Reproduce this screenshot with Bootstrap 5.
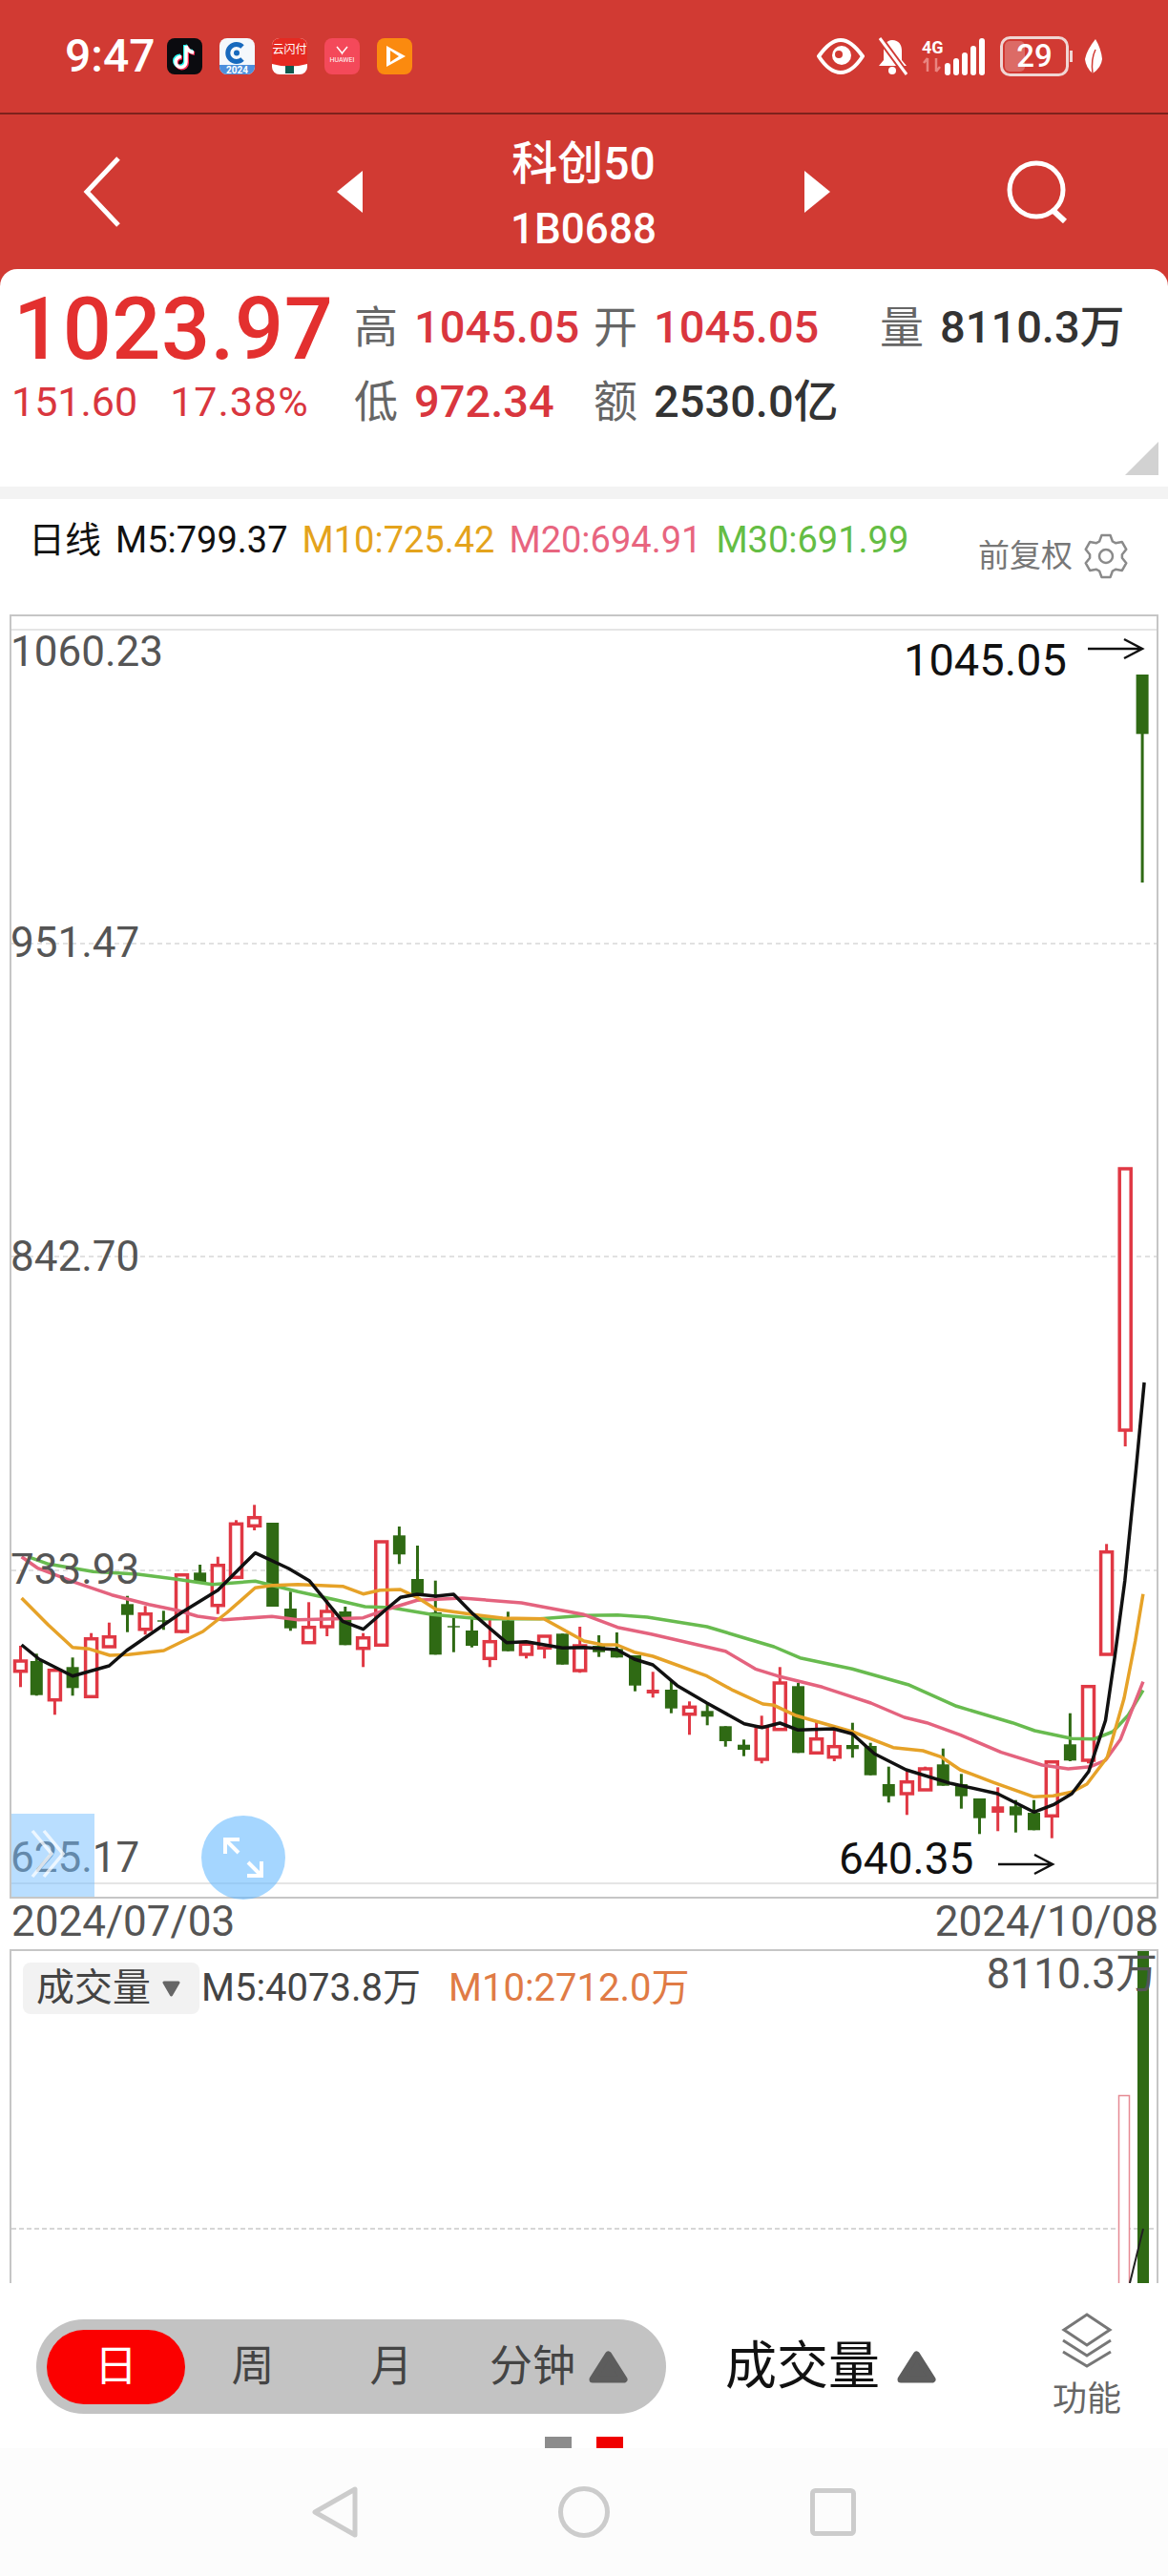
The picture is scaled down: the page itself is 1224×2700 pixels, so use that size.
<!DOCTYPE html>
<html lang="zh-CN">
<head>
  <meta charset="UTF-8" />
  <meta name="viewport" content="width=device-width, initial-scale=1.0" />
  <title>科创50</title>
  <link href="https://cdn.jsdelivr.net/npm/bootstrap@5.3.0/dist/css/bootstrap.min.css" rel="stylesheet" />
  <style>
    body { width: 1224px; height: 2700px; overflow: hidden; background: #fff; font-family: Roboto, "Noto Sans CJK SC", sans-serif; }
    svg { display: block; flex-shrink: 0; }

    .red-head { background: #d13a33; color: #fff; height: 300px; }
    .status-row { height: 120px; padding-left: 68px; padding-right: 69px; border-bottom: 2px solid #7d211c; }
    .clock { width: 107px; font-size: 48px; font-weight: 500; line-height: 1; }
    .app-icons { gap: 18px; }
    .status-icons { gap: 13px; }
    .nav-row { height: 162px; padding-left: 87px; }
    .back-cell { width: 266px; }
    .title-cell { width: 463px; padding-top: 18px; line-height: 68px; font-weight: 500; margin-bottom: 8px; }
    .title-name { font-size: 48px; }
    .title-code { font-size: 44px; }
    .next-cell { width: 212px; }

    .quote-panel { height: 228px; margin-top: -18px; background: #fff; border-radius: 18px 18px 0 0; }
    .quote-left { width: 371px; padding-top: 14px; padding-left: 14px; }
    .price-big { font-size: 90px; font-weight: 500; line-height: 100px; letter-spacing: .5px; color: #e3302f; }
    .price-sub { font-size: 43px; line-height: 50px; margin-left: -2px; color: #d9363e; white-space: nowrap; }
    .price-sub span + span { margin-left: 34px; letter-spacing: 1px; }
    .quote-right { padding-top: 31px; row-gap: 18px; }
    .q-line { height: 60px; line-height: 60px; white-space: nowrap; }
    .q-cell { font-size: 47px; font-weight: 500; }
    .q-cell.cw1 { width: 251px; }
    .q-cell.cw2 { width: 300px; }
    .q-label { display: inline-block; width: 63px; font-size: 46px; font-weight: 400; color: #666; }
    .up-num { color: #d9363e; }
    .dark-num { color: #333; }
    .corner-mark { right: 10px; bottom: 12px; width: 35px; height: 35px; background: #d2d2d2; clip-path: polygon(100% 0, 100% 100%, 0 100%); }
    .gray-strip { height: 13px; background: #f3f3f3; }

    .legend-row { height: 121px; padding: 18px 40px 0 30px; font-size: 38px; line-height: 50px; white-space: nowrap; }
    .legend-row span { margin-right: 15px; }
    .leg-m5 { color: #111; }
    .leg-m10 { color: #e4a31c; }
    .leg-m20 { color: #e8657f; }
    .leg-m30 { color: #64bd44; }
    .adj-box { gap: 10px; margin-top: 17px; font-size: 33px; color: #777; }

    .kline-box { height: 1346px; margin: 0 10px; border: 2px solid #c6c6c6; }
    .kline-box > svg, .vol-box > svg { position: absolute; left: 0; top: 0; }
    .axis-tag { position: absolute; left: -1px; font-size: 44px; line-height: 50px; color: #555; white-space: nowrap; }
    .mark-tag { position: absolute; line-height: 50px; color: #111; white-space: nowrap; }
    .mark-hi { font-size: 47px; }
    .mark-lo { font-size: 46px; }
    .hide-tab { position: absolute; left: 0; bottom: 0; width: 87px; height: 87px; background: rgba(115, 190, 255, .5); }
    .zoom-btn { position: absolute; left: 199px; top: 1257px; width: 88px; height: 88px; border-radius: 50%; background: rgba(100, 185, 255, .58); }

    .date-row { height: 53px; padding: 0 10px 0 12px; font-size: 44px; line-height: 48px; color: #555; }

    .vol-box { height: 350px; margin: 0 10px; border: 2px solid #c6c6c6; border-bottom: 0; overflow: hidden; }
    .vol-legend { padding: 12px 0 0 12px; font-size: 40px; line-height: 54px; white-space: nowrap; }
    .vol-chip { width: 185px; height: 54px; padding-left: 14px; margin-right: 2px; border-radius: 8px; background: #f2f2f2; color: #444; font-size: 40px; gap: 12px; }
    .vol-m5 { color: #444; width: 259px; }
    .vol-m10 { color: #e07b45; }
    .vol-max { position: absolute; right: -1px; top: 0; font-size: 44px; line-height: 48px; color: #555; }

    .tool-row { height: 161px; }
    .period-pill { width: 660px; height: 99px; margin: 38px 0 0 38px; padding-left: 11px; border-radius: 50px; background: #c3c3c3; font-size: 45px; color: #444; }
    .period-on { width: 145px; height: 78px; border-radius: 39px; background: #fb0000; color: #fff; }
    .period-a { width: 142px; }
    .period-b { width: 148px; }
    .period-c { margin-left: 29px; gap: 14px; }
    .vol-pick { margin: 38px 0 0 62px; height: 99px; gap: 18px; font-size: 54px; color: #111; }
    .func-col { width: 100px; margin: 30px 35px 0 auto; font-size: 36px; line-height: 40px; color: #666; gap: 13px; }
    .page-dots { height: 12px; gap: 26px; }
    .page-dots i { display: block; width: 28px; height: 12px; background: #8c8c8c; }
    .page-dots i.on { background: #f00000; }
    .sys-nav { height: 134px; gap: 210px; background: #fcfcfc; }
  </style>
</head>
<body>
  <div class="red-head">
    <div class="status-row d-flex align-items-center">
      <div class="clock">9:47</div>
      <div class="app-icons d-flex">
        <svg width="37" height="38" viewBox="0 0 37 38"><rect width="37" height="38" rx="8" fill="#0b0b0f"/><path d="M20 8v17a5.500 5.500 0 1 1-5-5.500M20 8c1 4 4 6.500 8 7" fill="none" stroke="#25f4ee" stroke-width="4" transform="translate(-1 -1)"/><path d="M20 8v17a5.500 5.500 0 1 1-5-5.500M20 8c1 4 4 6.500 8 7" fill="none" stroke="#fe2c55" stroke-width="4" transform="translate(1 1)"/><path d="M20 8v17a5.500 5.500 0 1 1-5-5.500M20 8c1 4 4 6.500 8 7" fill="none" stroke="#fff" stroke-width="3.500"/></svg>
        <svg width="37" height="38" viewBox="0 0 37 38"><rect width="37" height="38" rx="8" fill="#f4f8fc"/><path d="M0 28h37v2a8 8 0 0 1-8 8H8a8 8 0 0 1-8-8z" fill="#4d8fdc"/><path d="M24 9a9 9 0 1 0 0 13" fill="none" stroke="#1769bd" stroke-width="5"/><circle cx="18" cy="15.500" r="3" fill="#1769bd"/><text x="18.500" y="36.500" text-anchor="middle" font-size="10" font-weight="700" fill="#fff">2024</text></svg>
        <svg width="37" height="38" viewBox="0 0 37 38"><rect width="37" height="38" rx="8" fill="#fff"/><path d="M0 27V8a8 8 0 0 1 8-8h21a8 8 0 0 1 8 8v19q-18 5-37 0z" fill="#e52a22"/><text x="18.500" y="16" text-anchor="middle" font-size="12" fill="#fff">云闪付</text><rect x="14" y="29" width="9" height="8" fill="#0e5a4e"/></svg>
        <svg width="37" height="38" viewBox="0 0 37 38"><rect width="37" height="38" rx="8" fill="#f4495a"/><path d="M13 9q5 6 5.500 7q.500-1 5.500-7" fill="none" stroke="#fff" stroke-width="1.500"/><text x="18.500" y="25" text-anchor="middle" font-size="7" fill="#fff">HUAWEI</text></svg>
        <svg width="37" height="38" viewBox="0 0 37 38"><rect width="37" height="38" rx="8" fill="#fb8a0f"/><path d="M10 8l20 11-20 11z" fill="#fff"/><path d="M14 13l9 6-9 6z" fill="#fb8a0f"/></svg>
      </div>
      <div class="status-icons d-flex align-items-center ms-auto">
        <svg width="50" height="38" viewBox="0 0 50 38"><path d="M2 19Q14 2 25 2t23 17Q37 36 25 36T2 19z" fill="none" stroke="#fff" stroke-width="4"/><circle cx="26" cy="18" r="10" fill="#fff"/><circle cx="23" cy="17" r="4" fill="#d13a33"/></svg>
        <svg width="34" height="40" viewBox="0 0 34 40"><path d="M16 3c-6 0-9 5-9 11v10l-5 6h29l-5-6V14c0-6-3-11-10-11z" fill="#fff"/><circle cx="16" cy="35" r="4" fill="#fff"/><path d="M3 1l28 38" stroke="#d13a33" stroke-width="7"/><path d="M3 1l28 38" stroke="#fff" stroke-width="3"/></svg>
        <svg width="69" height="40" viewBox="0 0 69 40"><text x="0" y="17" font-size="18" font-weight="700" fill="#fff">4G</text><path d="M6 22v14M2 27l4-5M15 36V22M19 31l-4 5" stroke="#e98580" stroke-width="2.500" fill="none"/><rect x="24" y="27" width="6" height="13" rx="3" fill="#fff"/><rect x="33" y="22" width="6" height="18" rx="3" fill="#fff"/><rect x="42" y="16" width="6" height="24" rx="3" fill="#fff"/><rect x="51" y="9" width="6" height="31" rx="3" fill="#fff"/><rect x="60" y="1" width="6" height="39" rx="3" fill="#fff"/></svg>
        <svg width="76" height="42" viewBox="0 0 76 42"><rect x="1.500" y="1.500" width="69" height="39" rx="9" fill="none" stroke="#f0d6d4" stroke-width="3"/><rect x="5" y="5" width="21" height="32" rx="5" fill="#fff" opacity=".25"/><rect x="73" y="15" width="3" height="12" fill="#f0d6d4"/><text x="36" y="32" text-anchor="middle" font-size="33" font-weight="500" fill="#fff">29</text></svg>
        <svg width="18" height="38" viewBox="0 0 18 38"><path d="M11 1Q2 12 0 22q1 9 8 15q9-6 10-15Q17 11 11 1z" fill="#fff"/><path d="M8 37Q6 22 11 12" fill="none" stroke="#d13a33" stroke-width="1.500"/></svg>
      </div>
    </div>
    <div class="nav-row d-flex align-items-center">
      <div class="back-cell"><svg width="40" height="76" viewBox="0 0 40 76"><path d="M37 3L4 38l33 35" fill="none" stroke="#fff" stroke-width="5"/></svg></div>
      <svg width="27" height="44" viewBox="0 0 27 44"><path d="M27 0v44L0 22z" fill="#fff"/></svg>
      <div class="title-cell text-center">
        <div class="title-name">科创50</div>
        <div class="title-code">1B0688</div>
      </div>
      <div class="next-cell"><svg width="27" height="44" viewBox="0 0 27 44"><path d="M0 0v44l27-22z" fill="#fff"/></svg></div>
      <svg width="66" height="66" viewBox="0 0 66 66"><circle cx="31" cy="31" r="28" fill="none" stroke="#fff" stroke-width="5"/><path d="M48 52l13 12" stroke="#fff" stroke-width="6"/></svg>
    </div>
  </div>

  <div class="quote-panel d-flex position-relative">
    <div class="quote-left">
      <div class="price-big">1023.97</div>
      <div class="price-sub"><span>151.60</span><span>17.38%</span></div>
    </div>
    <div class="quote-right d-flex flex-column">
      <div class="q-line d-flex">
        <div class="q-cell cw1"><span class="q-label">高</span><span class="up-num">1045.05</span></div>
        <div class="q-cell cw2"><span class="q-label">开</span><span class="up-num">1045.05</span></div>
        <div class="q-cell"><span class="q-label">量</span><span class="dark-num">8110.3万</span></div>
      </div>
      <div class="q-line d-flex">
        <div class="q-cell cw1"><span class="q-label">低</span><span class="up-num">972.34</span></div>
        <div class="q-cell cw2"><span class="q-label">额</span><span class="dark-num">2530.0亿</span></div>
      </div>
    </div>
    <div class="corner-mark position-absolute"></div>
  </div>
  <div class="gray-strip"></div>

  <div class="legend-row d-flex align-items-start">
    <span class="leg-m5">日线</span>
    <span class="leg-m5">M5:799.37</span>
    <span class="leg-m10">M10:725.42</span>
    <span class="leg-m20">M20:694.91</span>
    <span class="leg-m30">M30:691.99</span>
    <div class="adj-box d-flex align-items-center ms-auto">前复权<svg id="gear" width="50" height="48" viewBox="0 0 50 48"></svg></div>
  </div>

  <div class="kline-box position-relative">
    <svg id="kline" width="1200" height="1342" viewBox="0 0 1200 1342"></svg>
    <div class="axis-tag" style="top:12px">1060.23</div>
    <div class="axis-tag" style="top:317px">951.47</div>
    <div class="axis-tag" style="top:646px">842.70</div>
    <div class="axis-tag" style="top:974px">733.93</div>
    <div class="axis-tag" style="top:1276px">625.17</div>
    <div class="mark-tag mark-hi" style="left:935px;top:21px">1045.05</div>
    <div class="mark-tag mark-lo" style="left:867px;top:1277px">640.35</div>
    <div class="hide-tab"><svg width="87" height="87" viewBox="0 0 87 87"><path d="M22 18l20 24-20 24M34 18l20 24-20 24" fill="none" stroke="#fff" stroke-opacity=".75" stroke-width="3.500"/></svg></div>
    <div class="zoom-btn"><svg width="88" height="88" viewBox="0 0 88 88"><path d="M25 25l14 14M25 40V25h15M63 63L49 49M63 48v15H48" fill="none" stroke="#fff" stroke-width="4"/></svg></div>
  </div>

  <div class="date-row d-flex justify-content-between">
    <span>2024/07/03</span>
    <span>2024/10/08</span>
  </div>

  <div class="vol-box position-relative">
    <svg width="1200" height="348" viewBox="0 0 1200 348">
      <path d="M0 291h1200" stroke="#c9c9c9" stroke-width="1.500" stroke-dasharray="5 3"/>
      <rect x="1160.500" y="151.500" width="11" height="200" fill="#fff" stroke="#e58a93" stroke-width="1.500"/>
      <rect x="1180" y="0" width="12" height="348" fill="#2f6a14"/>
      <path d="M1172 348l14-57" stroke="#222" stroke-width="2"/>
    </svg>
    <div class="vol-legend d-flex align-items-center position-relative">
      <div class="vol-chip d-flex align-items-center">成交量<svg width="19" height="17" viewBox="0 0 19 17"><path d="M2 2h15l-7.500 13z" fill="#666" stroke="#666" stroke-width="3" stroke-linejoin="round"/></svg></div>
      <span class="vol-m5">M5:4073.8万</span>
      <span class="vol-m10">M10:2712.0万</span>
    </div>
    <div class="vol-max">8110.3万</div>
  </div>

  <div class="tool-row d-flex align-items-start">
    <div class="period-pill d-flex align-items-center text-center">
      <div class="period-on d-flex align-items-center justify-content-center">日</div>
      <div class="period-a">周</div>
      <div class="period-b">月</div>
      <div class="period-c d-flex align-items-center">分钟<svg width="41" height="34" viewBox="0 0 41 34"><path d="M20.500 4L37 30H4z" fill="#5d5d5d" stroke="#5d5d5d" stroke-width="7" stroke-linejoin="round"/></svg></div>
    </div>
    <div class="vol-pick d-flex align-items-center">成交量<svg width="41" height="34" viewBox="0 0 41 34"><path d="M20.500 4L37 30H4z" fill="#5d5d5d" stroke="#5d5d5d" stroke-width="7" stroke-linejoin="round"/></svg></div>
    <div class="func-col d-flex flex-column align-items-center">
      <svg width="60" height="59" viewBox="0 0 60 59"><path d="M30 3l24 16-24 16L6 19z" fill="none" stroke="#777" stroke-width="3"/><path d="M5 30l25 16 25-16M5 42l25 15 25-15" fill="none" stroke="#777" stroke-width="3"/></svg>
      <div>功能</div>
    </div>
  </div>
  <div class="page-dots d-flex justify-content-center"><i></i><i class="on"></i></div>
  <div class="sys-nav d-flex align-items-center justify-content-center">
    <svg width="48" height="54" viewBox="0 0 48 54"><path d="M45 3v48L3 27z" fill="none" stroke="#ccc" stroke-width="5" stroke-linejoin="round"/></svg>
    <svg width="54" height="54" viewBox="0 0 54 54"><circle cx="27" cy="27" r="24.500" fill="none" stroke="#ccc" stroke-width="5"/></svg>
    <svg width="48" height="50" viewBox="0 0 48 50"><rect x="2.500" y="2.500" width="43" height="45" rx="3" fill="none" stroke="#ccc" stroke-width="5"/></svg>
  </div>

  <script src="https://cdn.jsdelivr.net/npm/bootstrap@5.3.0/dist/js/bootstrap.bundle.min.js"></script>
  <script>
    // chart data is in "trace" units: x = u / 2.562, y = 1540 + v / 3, both page px
    const px = u => (u / 2.562 - 12).toFixed(1);
    const py = v => (1540 + v / 3 - 646).toFixed(1);

    // [u, colour, wick top, body top, body bottom, wick bottom]
    const candles = [
      [55,"r",555,603,635,685],[98,"g",580,603,710,712],[147,"r",632,632,725,772],[195,"g",592,622,688,712],
      [245,"r",515,533,715,715],[293,"r",482,527,558,560],[342,"g",398,424,458,512],[390,"r",430,455,503,520],
      [439,"g",445,475,479,505],[488,"r",328,332,510,515],[537,"g",300,325,355,355],[585,"r",275,302,428,455],
      [634,"r",160,172,340,340],[683,"r",112,152,178,192],[732,"g",168,168,432,432],[780,"g",385,438,500,508],
      [829,"r",418,497,545,545],[878,"r",410,447,495,525],[927,"g",432,447,553,553],[975,"r",515,530,563,622],
      [1024,"r",228,228,553,553],[1072,"g",180,208,268,298],[1121,"g",240,345,395,400],[1169,"g",350,450,583,583],
      [1218,"g",468,493,497,575],[1267,"g",470,507,555,560],[1315,"r",470,542,595,622],[1364,"g",448,475,572,572],
      [1413,"r",545,550,582,595],[1462,"r",525,525,562,595],[1510,"g",517,517,614,614],[1557,"r",495,555,633,640],
      [1608,"g",522,555,575,590],[1656,"g",513,565,592,592],[1705,"g",585,585,680,698],[1753,"R",637,693,705,718],
      [1802,"g",662,693,752,767],[1851,"r",730,748,770,835],[1899,"g",735,760,778,805],[1948,"g",808,808,855,872],
      [1997,"g",850,866,882,902],[2045,"r",775,810,912,925],[2094,"r",622,672,818,820],[2143,"g",672,682,892,892],
      [2192,"r",795,848,892,895],[2240,"r",820,872,905,918],[2289,"g",797,867,880,907],[2337,"g",860,870,962,962],
      [2386,"g",935,990,1028,1048],[2435,"r",950,983,1020,1087],[2484,"r",935,942,1008,1010],[2532,"g",878,928,995,995],
      [2581,"g",958,990,1028,1067],[2630,"g",1035,1035,1097,1147],[2679,"R",1000,1060,1080,1138],[2727,"g",1040,1060,1088,1142],
      [2776,"g",1040,1080,1135,1135],[2824,"r",920,920,1090,1160],[2873,"g",767,865,916,918],[2922,"r",683,683,915,925],
      [2971,"r",235,260,582,582],[3021,"r",-945,-945,-123,-72],[3067,"g",-2499,-2499,-2312,-1845]
    ];

    const lines = [
      ["#68bb4f", [75,275,130,298,250,322,370,330,470,345,570,362,685,352,800,385,900,410,980,432,1050,435,1160,457,1290,470,1450,470,1568,460,1658,458,1738,465,1898,495,1998,530,2078,558,2148,593,2288,628,2438,677,2568,745,2718,797,2778,822,2878,847,2938,848,2988,825,3028,775,3069,695]],
      ["#e4637e", [58,275,100,310,200,355,300,395,400,425,480,445,530,462,600,473,730,463,800,473,900,470,975,467,1040,440,1120,412,1240,405,1400,420,1568,457,1658,497,1748,518,1848,545,1948,572,2028,628,2088,650,2208,685,2338,735,2428,780,2488,797,2578,835,2688,890,2798,930,2868,942,2928,935,2968,915,3008,850,3038,760,3069,668]],
      ["#e6a228", [58,405,130,490,195,560,240,565,295,585,345,583,440,570,545,510,610,450,685,373,730,365,800,362,920,368,975,392,1020,380,1075,378,1120,403,1170,440,1270,457,1350,468,1460,470,1568,540,1618,552,1656,552,1703,575,1753,588,1898,650,1968,695,2048,738,2078,742,2138,775,2288,825,2398,875,2478,885,2528,905,2578,945,2668,985,2776,1030,2828,1027,2878,1015,2918,990,2973,905,3018,720,3048,540,3069,392]],
      ["#111", [58,552,105,597,195,650,293,618,340,570,488,450,585,380,685,263,775,312,830,350,920,478,975,503,1040,437,1075,403,1120,393,1170,399,1218,393,1270,455,1360,545,1413,542,1510,562,1568,560,1656,567,1703,597,1753,615,1818,680,1898,735,1998,800,2046,812,2094,798,2143,820,2238,816,2288,832,2348,895,2433,945,2553,988,2678,1020,2776,1078,2828,1055,2878,1020,2923,950,2968,790,2993,590,3020,350,3038,140,3050,0,3072,-273]]
    ];

    let out = "";
    // grid lines
    out += '<path d="M0 14h1200M0 1328h1200" stroke="#ddd" stroke-width="1.500"/>';
    out += '<path d="M0 343h1200M0 671h1200M0 1000h1200" stroke="#d8d8d8" stroke-width="1.500" stroke-dasharray="5 4"/>';

    candles.forEach(c => {
      const x = +px(c[0]);
      const hot = c[1] !== "g";
      const col = hot ? "#e03844" : "#2f6a14";
      const top = +py(c[3]), bot = +py(c[4]);
      out += `<path d="M${x} ${py(c[2])}V${py(c[5])}" stroke="${col}" stroke-width="3"/>`;
      if (c[1] === "r") {
        out += `<rect x="${x - 6}" y="${top}" width="12" height="${(bot - top).toFixed(1)}" fill="#fff" stroke="${col}" stroke-width="3.5"/>`;
      } else {
        out += `<rect x="${x - 6.5}" y="${top}" width="13" height="${(bot - top).toFixed(1)}" fill="${col}"/>`;
      }
    });

    lines.forEach(l => {
      const pts = [];
      for (let i = 0; i < l[1].length; i += 2) pts.push(px(l[1][i]) + "," + py(l[1][i + 1]));
      out += `<polyline points="${pts.join(" ")}" fill="none" stroke="${l[0]}" stroke-width="3.5" stroke-linejoin="round"/>`;
    });

    // high / low arrows
    out += '<path d="M1128 34h56M1166 24l19 10-19 10" fill="none" stroke="#111" stroke-width="2.500"/>';
    out += '<path d="M1034 1308h56M1072 1298l19 10-19 10" fill="none" stroke="#111" stroke-width="2.500"/>';
    document.getElementById("kline").innerHTML = out;

    // settings cog, six teeth
    let d = "";
    for (let i = 0; i < 6; i++) {
      const a = Math.PI / 3 * i - Math.PI / 2;
      [[-.42, 17], [-.2, 22.5], [.2, 22.5], [.42, 17]].forEach((p, k) => {
        const x = 25 + p[1] * Math.cos(a + p[0]), y = 24 + p[1] * Math.sin(a + p[0]);
        d += (i === 0 && k === 0 ? "M" : "L") + x.toFixed(1) + " " + y.toFixed(1);
      });
    }
    document.getElementById("gear").innerHTML =
      `<path d="${d}z" fill="none" stroke="#8a8a8a" stroke-width="2.500" stroke-linejoin="round"/><circle cx="25" cy="24" r="7" fill="none" stroke="#8a8a8a" stroke-width="2.500"/>`;
  </script>
</body>
</html>
